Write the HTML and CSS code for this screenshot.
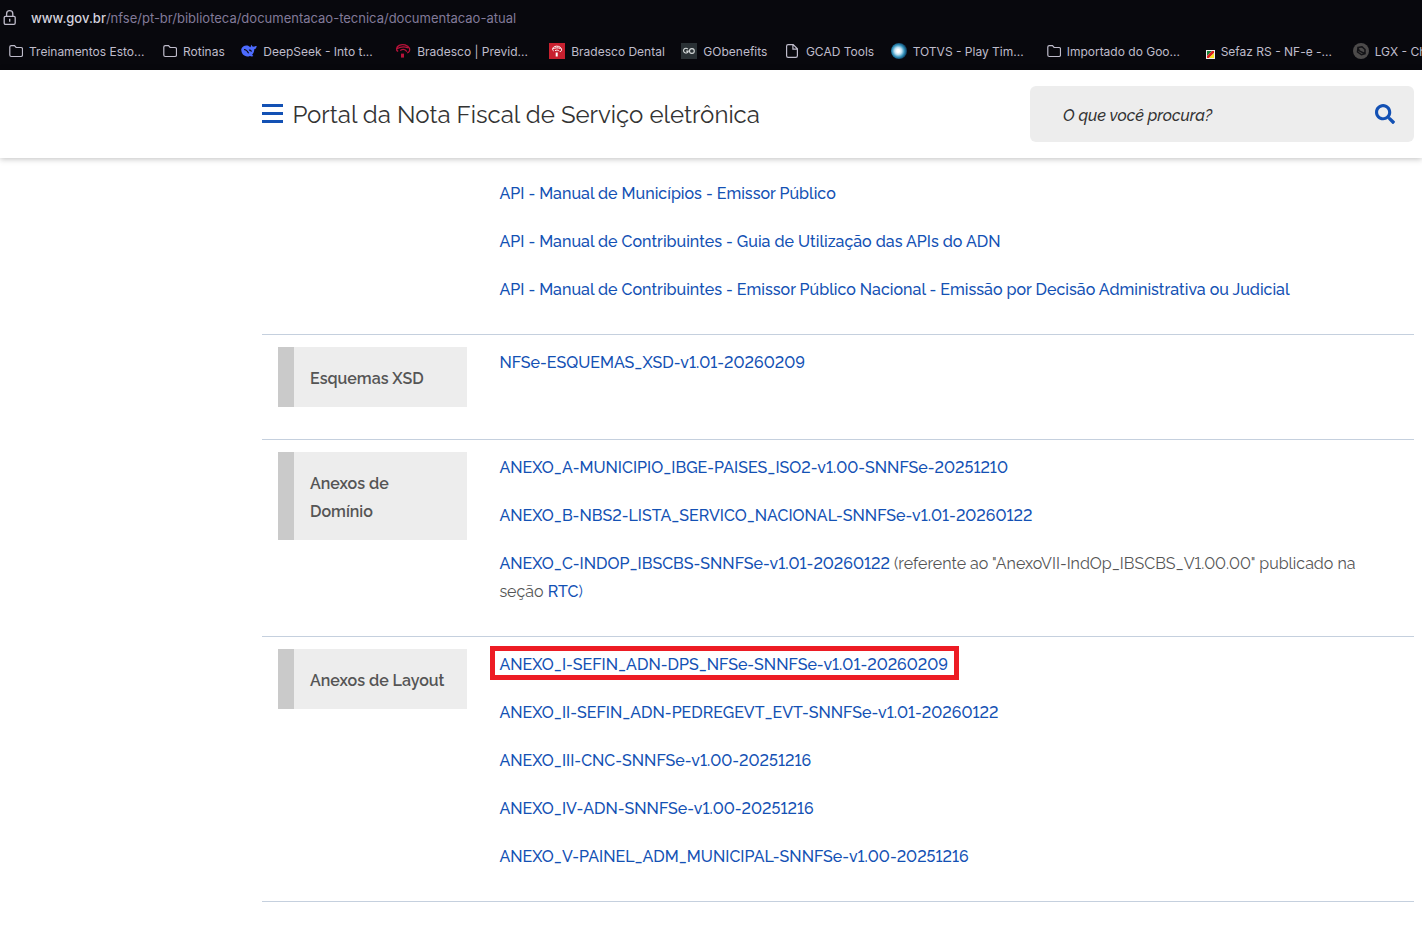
FILE: index.html
```
<!DOCTYPE html>
<html lang="pt-br">
<head>
  <meta charset="UTF-8">
  <title>Documentação Atual</title>
  <meta name="viewport" content="width=device-width, initial-scale=1.0">
  <link rel="stylesheet" href="styles.css">
</head>
<body>
  <div class="browser">
    <div class="address-bar">
      <svg class="lock" width="14" height="16" viewBox="0 0 14 16" fill="none" stroke="#bfbccb" stroke-width="1.3">
        <rect x="1.2" y="6.3" width="11" height="8" rx="1.3"/>
        <path d="M3.6 6V3.8a3.1 3.1 0 0 1 6.2 0V6M6.7 8.8v3"/>
      </svg>
      <span class="url"><b>www.gov.br</b>/nfse/pt-br/biblioteca/documentacao-tecnica/documentacao-atual</span>
    </div>

    <div class="bookmarks">
      <div class="bookmark clipped">
        <svg width="16" height="16" viewBox="0 0 16 16" fill="none" stroke="#bfbccb" stroke-width="1.2">
          <path d="M2.8 4.1q0-1.5 1.5-1.5h3.200l1.600 1.900h4.900q1.500 0 1.500 1.500v6q0 1.500-1.500 1.500H4.300q-1.500 0-1.500-1.500z"/>
        </svg>
        <span>Treinamentos Esto...</span>
      </div>
      <div class="bookmark">
        <svg width="16" height="16" viewBox="0 0 16 16" fill="none" stroke="#bfbccb" stroke-width="1.2">
          <path d="M2.8 4.1q0-1.5 1.5-1.5h3.200l1.600 1.900h4.900q1.500 0 1.500 1.500v6q0 1.500-1.500 1.500H4.300q-1.500 0-1.500-1.500z"/>
        </svg>
        <span>Rotinas</span>
      </div>
      <div class="bookmark clipped">
        <svg width="16" height="16" viewBox="0 0 16 16">
          <path fill="#4d6bfe" d="M.2 6.300C1 3.600 3.700 2.100 6.300 2.600c1.400.3 1.800 1.100 3.300 1.600 0-1.100.4-1.900 1.100-2.500.1 1.200.8 1.900 1.700 2 .9-.1 1.600-.7 3.300-.8-.2 2-1.100 3-2.400 3.400-.1 2.500-1 4.300-2.200 5.500l1.300 1.200c-1.200.7-2.600.3-3.500-.1C4.300 14.700.3 11.600.2 6.300z"/>
          <path fill="none" stroke="#08080d" stroke-width="1.1" d="M3 6.500c2 0 3.600 1.800 4.600 3.700M8 7.300c1-.6 2.200.1 2.300 1.500"/>
        </svg>
        <span>DeepSeek - Into t...</span>
      </div>
      <div class="bookmark clipped">
        <svg width="16" height="16" viewBox="0 0 16 16" fill="none" stroke="#b8123a" stroke-width="1.3">
          <path d="M3.200 8.400C.5 7.200 1.200 4 4.200 2.400c3.500-1.700 8.600-.6 10.300 3 .7 2.200-.4 4-2.300 4.400M2 5.800c3.200-2 7.400-2.300 11-.9M5.200 7.500c2.600-1.600 5.300-1 6.700 1.200"/>
          <path stroke-width="3" d="M7.500 10.600v4"/>
        </svg>
        <span>Bradesco | Previd...</span>
      </div>
      <div class="bookmark">
        <svg width="16" height="16" viewBox="0 0 16 16" fill="none" stroke="#fff" stroke-width="1">
          <rect width="16" height="16" fill="#c8202f" stroke="none"/>
          <path d="M4.700 8C2.900 7 3.200 4.900 5.300 3.700c2.600-1.200 6.100-.4 7.200 2.100.4 1.600-.3 2.700-1.500 3M4 5.900c2.200-1.300 5-1.400 7.600-.4M6 7.600c1.800-.9 3.400-.5 4.300.8"/>
          <path stroke-width="2" d="M7.700 9.500v4"/>
        </svg>
        <span>Bradesco Dental</span>
      </div>
      <div class="bookmark">
        <svg width="16" height="16" viewBox="0 0 16 16" fill="none" stroke="#d9dddd" stroke-width="1.100">
          <rect width="16" height="16" fill="#2a3135" stroke="none"/>
          <path d="M6.800 6.100a2.400 2.400 0 1 0 .5 2H5.200"/>
          <circle cx="10.900" cy="8" r="2.400"/>
        </svg>
        <span>GObenefits</span>
      </div>
      <div class="bookmark">
        <svg width="16" height="16" viewBox="0 0 16 16" fill="none" stroke="#bfbccb" stroke-width="1.200">
          <path d="M4.100 1.600h5.100l4.200 4.200v7q0 1.600-1.600 1.600H4.100q-1.500 0-1.500-1.600V3.200q0-1.600 1.500-1.600zM8.900 1.900v4.200h4.200"/>
        </svg>
        <span>GCAD Tools</span>
      </div>
      <div class="bookmark clipped">
        <i class="orb"></i>
        <span>TOTVS - Play Tim...</span>
      </div>
      <div class="bookmark clipped">
        <svg width="16" height="16" viewBox="0 0 16 16" fill="none" stroke="#bfbccb" stroke-width="1.200">
          <path d="M2.800 4.100q0-1.500 1.500-1.500h3.200l1.600 1.900h4.900q1.500 0 1.500 1.500v6q0 1.500-1.500 1.500H4.300q-1.500 0-1.500-1.500z"/>
        </svg>
        <span>Importado do Goo...</span>
      </div>
      <div class="bookmark clipped">
        <svg width="16" height="16" viewBox="0 0 16 16">
          <rect x="7" y="7" width="9" height="9" fill="#eee"/>
          <path fill="#16823a" d="M8 8h5l-5 5z"/>
          <path fill="#d8201e" d="M13 8h2v2l-5 5H8v-2z"/>
          <path fill="#f7e11b" d="M15 10v5h-5z"/>
        </svg>
        <span>Sefaz RS - NF-e -...</span>
      </div>
      <div class="bookmark">
        <svg width="16" height="16" viewBox="0 0 16 16">
          <circle cx="8" cy="8" r="8" fill="#4c4a4a"/>
          <path fill="none" stroke="#121216" stroke-width="1.500" d="M5 4.500l4-.8 3 2.800v4.300l-3.500 1L4.500 9zM5 4.800l1.200 3 5.400 2.700"/>
        </svg>
        <span>LGX - Ch</span>
      </div>
    </div>
  </div>

  <div class="header">
    <button class="menu-button"><span></span><span></span><span></span></button>
    <h1>Portal da Nota Fiscal de Serviço eletrônica</h1>
    <div class="search">
      <span>O que você procura?</span>
      <svg width="20" height="20" viewBox="0 0 512 512" fill="#1351b4">
        <path d="M505 442.700L405.300 343c-4.500-4.500-10.600-7-17-7H372c27.600-35.300 44-79.700 44-128C416 93.100 322.900 0 208 0S0 93.100 0 208s93.100 208 208 208c48.300 0 92.700-16.400 128-44v16.300c0 6.400 2.500 12.500 7 17l99.700 99.700c9.400 9.400 24.600 9.400 33.900 0l28.300-28.300c9.400-9.400 9.400-24.600.1-34zM208 336c-70.700 0-128-57.200-128-128 0-70.700 57.200-128 128-128 70.700 0 128 57.200 128 128 0 70.700-57.200 128-128 128z"/>
      </svg>
    </div>
  </div>

  <div class="content">
    <div class="row">
      <div class="label-col"></div>
      <div class="links">
        <p><a>API - Manual de Municípios - Emissor Público</a></p>
        <p><a>API - Manual de Contribuintes - Guia de Utilização das APIs do ADN</a></p>
        <p><a>API - Manual de Contribuintes - Emissor Público Nacional - Emissão por Decisão Administrativa ou Judicial</a></p>
      </div>
    </div>
    <div class="row">
      <div class="label-col"><div class="label">Esquemas XSD</div></div>
      <div class="links">
        <p><a>NFSe-ESQUEMAS_XSD-v1.01-20260209</a></p>
      </div>
    </div>
    <div class="row">
      <div class="label-col"><div class="label">Anexos de Domínio</div></div>
      <div class="links">
        <p><a>ANEXO_A-MUNICIPIO_IBGE-PAISES_ISO2-v1.00-SNNFSe-20251210</a></p>
        <p><a>ANEXO_B-NBS2-LISTA_SERVICO_NACIONAL-SNNFSe-v1.01-20260122</a></p>
        <p><a>ANEXO_C-INDOP_IBSCBS-SNNFSe-v1.01-20260122</a> (referente ao "AnexoVII-IndOp_IBSCBS_V1.00.00" publicado na<br>seção <a>RTC</a><a class="thin">)</a></p>
      </div>
    </div>
    <div class="row">
      <div class="label-col"><div class="label">Anexos de Layout</div></div>
      <div class="links">
        <p><a class="marked">ANEXO_I-SEFIN_ADN-DPS_NFSe-SNNFSe-v1.01-20260209</a></p>
        <p><a>ANEXO_II-SEFIN_ADN-PEDREGEVT_EVT-SNNFSe-v1.01-20260122</a></p>
        <p><a>ANEXO_III-CNC-SNNFSe-v1.00-20251216</a></p>
        <p><a>ANEXO_IV-ADN-SNNFSe-v1.00-20251216</a></p>
        <p><a>ANEXO_V-PAINEL_ADM_MUNICIPAL-SNNFSe-v1.00-20251216</a></p>
      </div>
    </div>
  </div>
</body>
</html>
```
FILE: styles.css
```
* {
  box-sizing: border-box;
  margin: 0;
  padding: 0;
}

body {
  font-family: Raleway, Lato, sans-serif;
  font-variant-numeric: lining-nums;
  font-size: 16px;
  color: #555;
  background-color: #fff;
  overflow: hidden;
}

/* browser bars */
.browser {
  height: 70px;
  background-color: #08080d;
  font-family: Inter, sans-serif;
  color: #bfbccb;
  overflow: hidden;
}

.address-bar {
  display: flex;
  align-items: center;
  gap: 14px;
  height: 36px;
  padding-left: 3px;
  font-size: 13px;
  color: #827a99;
}

.url b {
  font-weight: 500;
  color: #d5d3de;
}

.bookmarks {
  display: flex;
  gap: 16.5px;
  height: 30px;
  padding-left: 7px;
  font-size: 12px;
}

.bookmark {
  display: flex;
  align-items: center;
  gap: 6px;
  flex-shrink: 0;
  white-space: nowrap;
}

.clipped span {
  width: 115.5px;
}

.orb {
  width: 16px;
  height: 16px;
  border-radius: 50%;
  background: radial-gradient(circle at 45% 50%, #fff 12%, #bfe0f2 30%, #2f8fb8 52%, #12466b 70%);
}

/* site header */
.header {
  position: relative;
  display: flex;
  align-items: center;
  height: 88px;
  padding: 0 8px 0 262px;
  background-color: #fff;
  box-shadow: 0 1px 6px rgba(0, 0, 0, 0.25);
}

.menu-button {
  display: flex;
  flex-direction: column;
  gap: 5px;
  width: 21px;
  margin-right: 9.4px;
  padding-bottom: 1px;
  border: none;
  background: none;
}

.menu-button span {
  height: 3px;
  background-color: #1351b4;
}

.header h1 {
  font-size: 24px;
  font-weight: 400;
  color: #333;
}

.search {
  display: flex;
  align-items: center;
  justify-content: space-between;
  width: 384px;
  height: 56px;
  margin-left: auto;
  padding: 0 19px 0 33px;
  border-radius: 6px;
  background-color: #ededed;
  font-style: italic;
  font-weight: 500;
  color: #333;
}

.search span {
  padding-top: 2px;
}

.search svg {
  margin-bottom: 1px;
}

/* documents table */
.content {
  margin: 8px 8px 0 262px;
}

.row {
  display: flex;
  padding-top: 12px;
  border-bottom: 1px solid #c5d0de;
}

.label-col {
  width: 205px;
  margin-right: 32.4px;
  padding: 0 0 32px 16px;
  flex-shrink: 0;
}

.label {
  padding: 18px 16px 14px;
  border-left: 16px solid #cacaca;
  background-color: #ededed;
  line-height: 28px;
  font-weight: 600;
}

.links {
  padding: 2px 0 30px;
}

.links p {
  line-height: 28px;
  margin-bottom: 20px;
}

.links p:last-child {
  margin-bottom: 0;
}

.links a {
  color: #1351b4;
  font-weight: 500;
}

.links .thin {
  font-weight: 400;
}

.links .marked {
  padding: 4px 6px 1px 4.5px;
  margin-left: -9.5px;
  border: 5px solid #ed1c24;
}
```
